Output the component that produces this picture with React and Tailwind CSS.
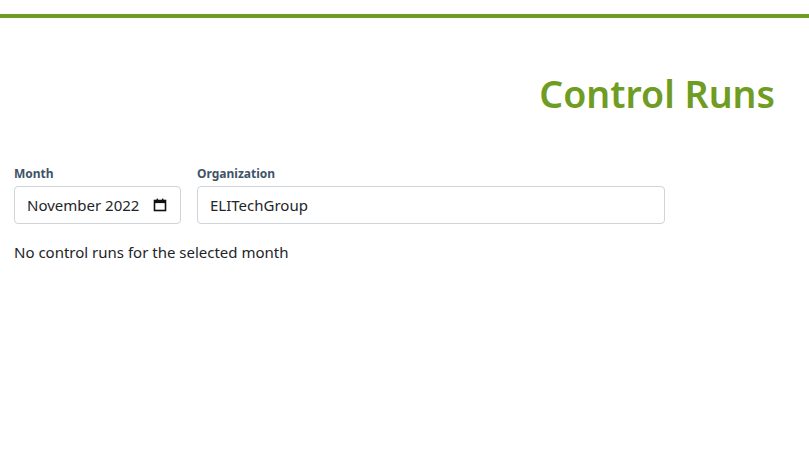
import React from 'react';

const CalendarIcon = () => (
  <svg width="16" height="16" viewBox="0 0 16 16" fill="none">
    <rect x="2.5" y="3.5" width="11" height="10" stroke="#111" strokeWidth="1.6" />
    <rect x="2.5" y="3.5" width="11" height="2.6" fill="#111" />
    <rect x="4.6" y="1.6" width="1.4" height="2.4" fill="#111" />
    <rect x="10" y="1.6" width="1.4" height="2.4" fill="#111" />
  </svg>
);

const App = () => {
  return (
    <div className="min-h-[461px] bg-white text-[#212529]" style={{ fontFamily: '"Noto Sans", "Open Sans", sans-serif' }}>
      <div className="pt-[14px]">
        <div className="h-[4px] bg-[#6f9c22]"></div>
      </div>

      <div className="px-[14px]">
        {/* Titulo */}
        <div className="flex justify-end pr-[20px] pt-[48px]">
          <h1 className="text-[37.5px] leading-[56px] font-semibold text-[#6f9c22]">Control Runs</h1>
        </div>

        {/* Filtros */}
        <div className="mt-[43px] flex gap-[16px]">
          <div className="w-[167px]">
            <label className="block text-[12px] font-bold text-[#3f5468] leading-[18px] mb-[3px]">Month</label>
            <div className="h-[38px] border border-[#ced4da] rounded-[4px] px-[12px] flex items-center justify-between text-[15px]">
              <span>November 2022</span>
              <CalendarIcon />
            </div>
          </div>
          <div className="w-[468px]">
            <label className="block text-[12px] font-bold text-[#3f5468] leading-[18px] mb-[3px]">Organization</label>
            <div className="h-[38px] border border-[#ced4da] rounded-[4px] px-[12px] flex items-center text-[15px]">
              ELITechGroup
            </div>
          </div>
        </div>

        <p className="mt-[17px] text-[15px]">No control runs for the selected month</p>
      </div>
    </div>
  );
};

export default App;
